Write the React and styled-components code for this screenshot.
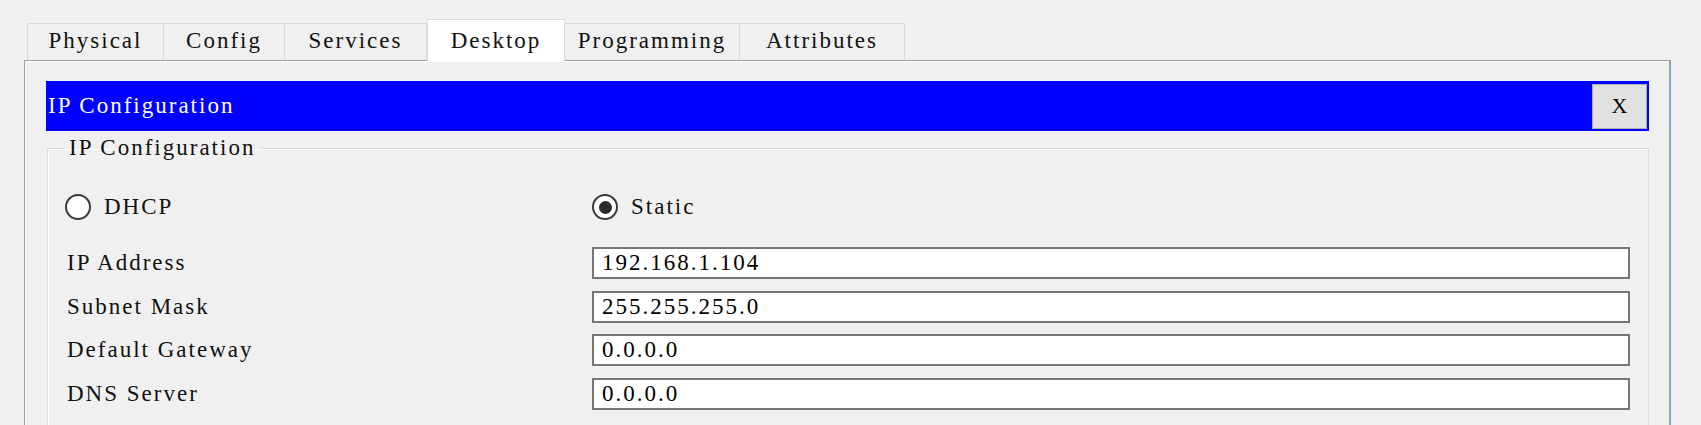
import styled, { createGlobalStyle } from 'styled-components';

const GlobalStyle = createGlobalStyle`
  html, body {
    margin: 0;
    padding: 0;
    background: #f0f0f0;
    overflow: hidden;
  }
  body {
    font-family: "Liberation Serif", "DejaVu Serif", serif;
    color: #111;
  }
`;

const Window = styled.div`
  box-sizing: border-box;
  height: 425px;
  padding: 19px 30px 0 24px;
  overflow: hidden;
  font-size: 23px;
  letter-spacing: 2px;
  line-height: 24px;
`;

const TabBar = styled.div`
  display: flex;
  align-items: flex-end;
  padding-left: 3px;
`;

const Tab = styled.div`
  box-sizing: border-box;
  width: ${p => p.width}px;
  height: ${p => (p.active ? 42 : 37)}px;
  margin-bottom: ${p => (p.active ? -1 : 0)}px;
  padding-top: ${p => (p.active ? 9 : 5)}px;
  display: flex;
  justify-content: center;
  background: ${p => (p.active ? '#ffffff' : '#f0f0f0')};
  border: 1px solid #d9d9d9;
  border-bottom: none;
  border-left: ${p => (p.first || p.active ? '1px solid #d9d9d9' : 'none')};
  position: relative;
  z-index: ${p => (p.active ? 1 : 0)};
  white-space: nowrap;
`;

const Panel = styled.div`
  box-sizing: border-box;
  height: 400px;
  border-top: 1px solid #a0a0a0;
  border-left: 1px solid #a0a0a0;
  border-right: 2px solid #86a8c2;
  box-shadow: inset 1px 1px 0 #ffffff;
  padding: 20px 20px 0 21px;
`;

const TitleBar = styled.div`
  height: 50px;
  background: #0000ff;
  color: #ffffff;
  display: flex;
  align-items: center;
  justify-content: space-between;
  padding: 0 2px 0 2px;
`;

const CloseButton = styled.div`
  box-sizing: border-box;
  width: 55px;
  height: 45px;
  background: #e1e1e1;
  border: 1px solid #adadad;
  color: #000;
  font-size: 22px;
  letter-spacing: 0;
  display: flex;
  align-items: center;
  justify-content: center;
`;

const GroupBox = styled.fieldset`
  margin: 5px 0 0 1px;
  padding: 0 18px 0 19px;
  min-width: 0;
  border: 1px solid #dcdcdc;
  box-shadow: inset 1px 1px 0 #ffffff;
  height: 330px;
  box-sizing: border-box;
`;

const Legend = styled.legend`
  padding: 0 4px;
  margin-left: -2px;
  line-height: 24px;
`;

const RadioRow = styled.div`
  display: grid;
  grid-template-columns: 525px 1fr;
  height: 32px;
  margin-top: 31px;
  margin-bottom: 24px;
`;

const RadioOption = styled.div`
  display: flex;
  align-items: center;
  gap: 13px;
  margin-left: ${p => p.offset || 0}px;
`;

const RadioCircle = styled.span`
  box-sizing: border-box;
  width: 26px;
  height: 26px;
  border-radius: 50%;
  border: 2px solid #3a3a3a;
  background: #ffffff;
  display: flex;
  align-items: center;
  justify-content: center;

  &::after {
    content: '';
    display: ${p => (p.checked ? 'block' : 'none')};
    width: 13px;
    height: 13px;
    border-radius: 50%;
    background: #2b2b2b;
  }
`;

const Fields = styled.div`
  display: grid;
  grid-template-columns: 525px 1fr;
  row-gap: 11.7px;
  align-items: center;
`;

const Label = styled.div`
  white-space: nowrap;
`;

const FieldBox = styled.div`
  box-sizing: border-box;
  height: 32px;
  background: #ffffff;
  border: 2px solid #767676;
  padding-left: 8px;
  display: flex;
  align-items: center;
  color: #000;
`;

const tabs = [
  { name: 'Physical', width: 137 },
  { name: 'Config', width: 121 },
  { name: 'Services', width: 142 },
  { name: 'Desktop', width: 138, active: true },
  { name: 'Programming', width: 175 },
  { name: 'Attributes', width: 165 },
];

const fields = [
  { label: 'IP Address', value: '192.168.1.104' },
  { label: 'Subnet Mask', value: '255.255.255.0' },
  { label: 'Default Gateway', value: '0.0.0.0' },
  { label: 'DNS Server', value: '0.0.0.0' },
];

const App = () => {
  return (
    <>
      <GlobalStyle />
      <Window>
        <TabBar>
          {tabs.map((tab, i) => (
            <Tab key={tab.name} width={tab.width} active={tab.active} first={i === 0}>
              {tab.name}
            </Tab>
          ))}
        </TabBar>

        <Panel>
          <TitleBar>
            <span>IP Configuration</span>
            <CloseButton>X</CloseButton>
          </TitleBar>

          <GroupBox>
            <Legend>IP Configuration</Legend>

            <RadioRow>
              <RadioOption offset={-2}>
                <RadioCircle />
                DHCP
              </RadioOption>
              <RadioOption>
                <RadioCircle checked />
                Static
              </RadioOption>
            </RadioRow>

            <Fields>
              {fields.map(field => [
                <Label key={field.label}>{field.label}</Label>,
                <FieldBox key={field.label + '-value'}>{field.value}</FieldBox>,
              ])}
            </Fields>
          </GroupBox>
        </Panel>
      </Window>
    </>
  );
};

export default App;
